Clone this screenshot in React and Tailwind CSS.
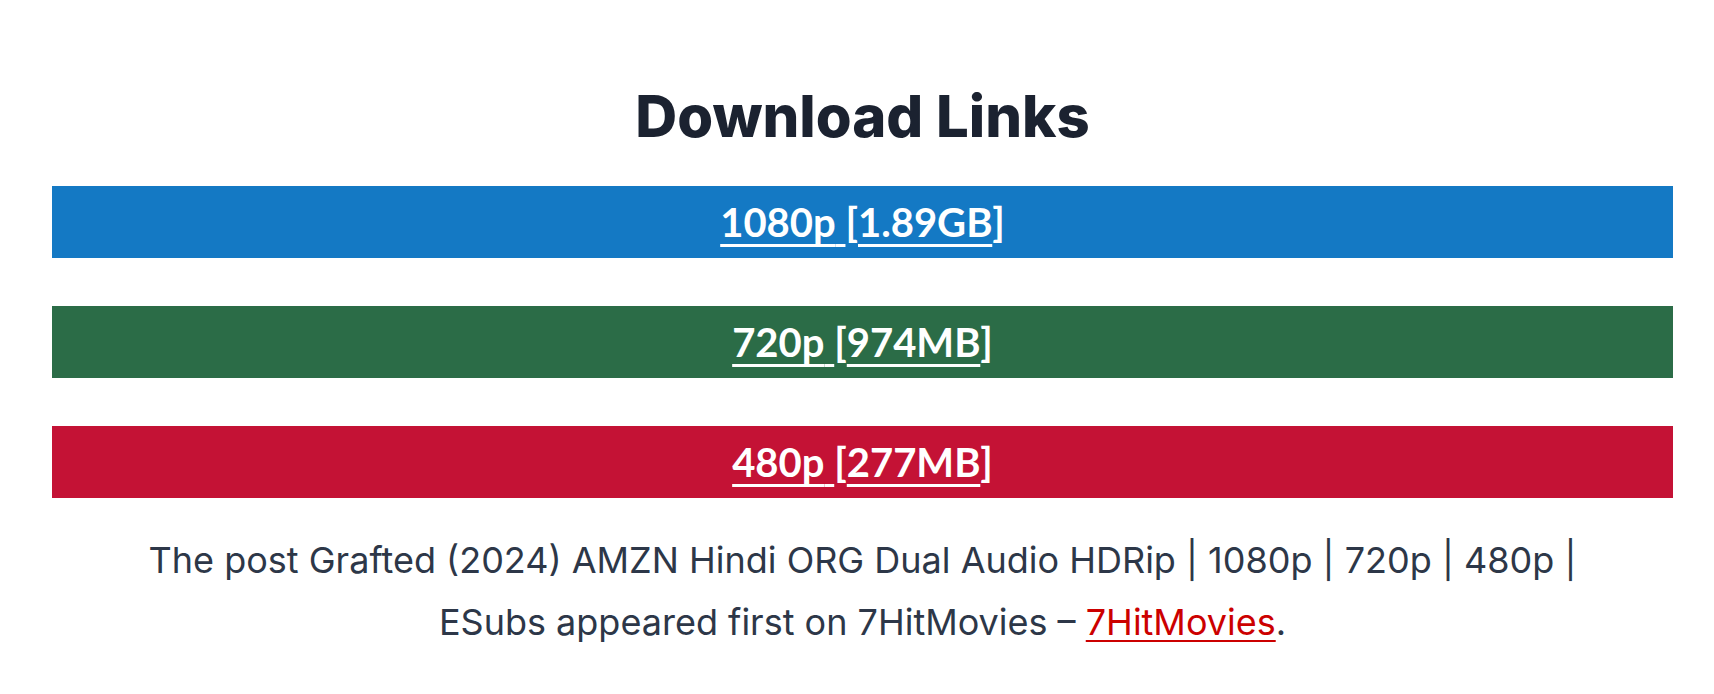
import React from "react";

const links = [
  { res: "1080p", size: "1.89GB", color: "bg-[#1479c4]" },
  { res: "720p", size: "974MB", color: "bg-[#2b6c47]" },
  { res: "480p", size: "277MB", color: "bg-[#c41235]" },
];

function DownloadButton({ res, size, color }) {
  return (
    <div
      className={`${color} h-[72px] flex items-center justify-center text-white text-[40px] font-bold font-['Lato',sans-serif]`}
    >
      <span>
        <a href="#" className="underline decoration-[3px] underline-offset-[7px]">
          {res}{" "}
        </a>
        [
        <a href="#" className="underline decoration-[3px] underline-offset-[7px]">
          {size}
        </a>
        ]
      </span>
    </div>
  );
}

export default function App() {
  return (
    <div className="bg-white w-full min-h-[694px] pl-[52px] pr-[41px] pt-[87px]">
      <h2 className="text-center text-[#1b2230] text-[58px] leading-none font-extrabold font-['Inter',sans-serif]">
        Download Links
      </h2>

      <div className="mt-[41px] flex flex-col gap-[48px]">
        {links.map((l) => (
          <DownloadButton key={l.res} {...l} />
        ))}
      </div>

      <p className="mt-[31px] text-center text-[#2d3748] text-[36px] leading-[62px] font-['Inter',sans-serif] px-[70px]">
        The post Grafted (2024) AMZN Hindi ORG Dual Audio HDRip | 1080p | 720p | 480p | ESubs appeared first on 7HitMovies –{" "}
        <a href="#" className="text-[#cc0000] underline decoration-[2px] underline-offset-[5px]">
          7HitMovies
        </a>
        .
      </p>
    </div>
  );
}
